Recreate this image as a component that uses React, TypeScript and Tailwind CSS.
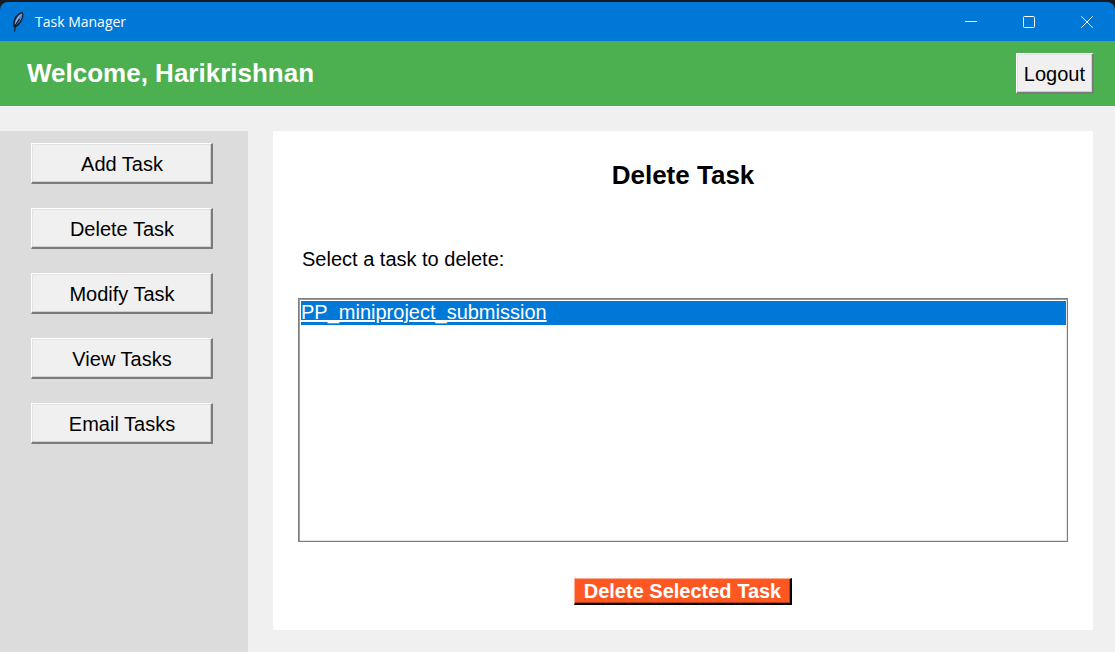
import React, { useState } from "react";

const actions = ["Add Task", "Delete Task", "Modify Task", "View Tasks", "Email Tasks"];

const raised =
  "border-t border-l border-r-2 border-b-2 border-t-white border-l-white border-r-[#7b7b7b] border-b-[#7b7b7b] bg-[#f0f0f0] pt-0.5 text-[20px] leading-6 text-black shadow-[inset_-1px_-1px_0_#d0d0d0,inset_1px_1px_0_#e3e3e3]";

function FeatherIcon() {
  return (
    <svg width="14" height="22" viewBox="0 0 14 22" aria-hidden="true">
      <path d="M11.500.8C8 1.600 4.200 4.500 2.800 8.800c-.9 2.800-.9 5.200-.2 7.700l2.800-.4C8.800 14 11.400 10 12.300 6c.4-2 .1-4-.8-5.200Z" fill="#17202e" />
      <path d="M11 2.200C8 3.500 5.200 6.500 4.200 10c-.5 1.800-.6 3.300-.4 4.700C7.500 12.700 10.200 9 11.100 5.500c.3-1.200.3-2.300-.1-3.300Z" fill="#4f86cf" />
      <path d="M9.800 3.500C7.500 5.500 5.200 9.500 4.600 13" stroke="#b4cff0" strokeWidth="1" fill="none" />
      <path d="M8.500 8 4.400 14 3.600 20.500" stroke="#111827" strokeWidth="1.200" fill="none" />
    </svg>
  );
}

function TitleBar() {
  return (
    <div className="bg-[#171b22]">
      <div className="h-0.5" />
      <div className="flex h-[39px] items-center rounded-t-lg bg-[#0078d7] pl-[11px] text-white">
        <FeatherIcon />
        <span className="ml-[10px] font-['Open_Sans','Noto_Sans',sans-serif] text-[14px] leading-5">Task Manager</span>
        <div className="-mr-px ml-auto flex h-full">
          <button aria-label="Minimize" className="flex w-[58px] items-center justify-center">
            <svg width="12" height="12" viewBox="0 0 12 12"><path d="M0 5.500h12" stroke="white" /></svg>
          </button>
          <button aria-label="Maximize" className="flex w-[58px] items-center justify-center">
            <svg width="12" height="12" viewBox="0 0 12 12"><rect x=".5" y=".5" width="11" height="11" rx="1" stroke="white" fill="none" /></svg>
          </button>
          <button aria-label="Close" className="flex w-[58px] items-center justify-center">
            <svg width="12" height="12" viewBox="0 0 12 12"><path d="m.3.3 11.400 11.400M11.700.3.3 11.700" stroke="white" /></svg>
          </button>
        </div>
      </div>
    </div>
  );
}

export default function App() {
  const [selected, setSelected] = useState("PP_miniproject_submission");
  return (
    <div className="flex min-h-screen flex-col overflow-x-hidden bg-[#f0f0f0] font-['Liberation_Sans',Arial,sans-serif] text-black">
      <TitleBar />
      <header className="flex h-[65px] items-center justify-between bg-[#4caf50] pr-[21px] pl-[27px]">
        <h1 className="pb-0.5 text-[26px] leading-8 font-bold text-white">Welcome, Harikrishnan</h1>
        <button className={`h-[41px] px-[7px] ${raised}`}>Logout</button>
      </header>
      <div className="flex flex-1 gap-[25px] pt-[25px]">
        <nav className="flex w-[248px] shrink-0 flex-col gap-6 bg-[#dcdcdc] pt-3 pr-[35px] pl-[31px]">
          {actions.map((label) => (
            <button key={label} className={`h-[41px] pl-px ${raised}`}>
              {label}
            </button>
          ))}
        </nav>
        <main className="mr-[22px] mb-[22px] flex flex-1 flex-col bg-white px-[25px] pb-[25px]">
          <h2 className="mt-7 text-center text-[26px] leading-8 font-bold">Delete Task</h2>
          <label htmlFor="tasks" className="mt-14 pl-1 text-[20px] leading-6">
            Select a task to delete:
          </label>
          <select
            id="tasks"
            size={8}
            value={selected}
            onChange={(e) => setSelected(e.target.value)}
            className="mt-[27px] min-h-0 flex-1 appearance-none overflow-hidden border border-[#7c7c7c] bg-white pt-0.5 pr-px pl-0.5 text-[20px] shadow-[inset_1px_1px_0_#a0a0a0,inset_-1px_-1px_0_#e3e3e3] outline-none"
          >
            <option
              value="PP_miniproject_submission"
              className="h-6 min-h-6 p-0 leading-6 checked:bg-linear-to-r checked:from-[#0078d7] checked:to-[#0078d7] checked:underline checked:[-webkit-text-fill-color:white]"
            >
              PP_miniproject_submission
            </option>
          </select>
          <button className="mt-9 h-[27px] self-center border-t border-r-2 border-b-2 border-l border-t-[#ffab91] border-r-black border-b-black border-l-[#ffab91] bg-[#ff5722] px-[9px] text-[20px] leading-6 font-bold text-white shadow-[inset_-1px_-1px_0_#b33d18]">
            Delete Selected Task
          </button>
        </main>
      </div>
    </div>
  );
}
